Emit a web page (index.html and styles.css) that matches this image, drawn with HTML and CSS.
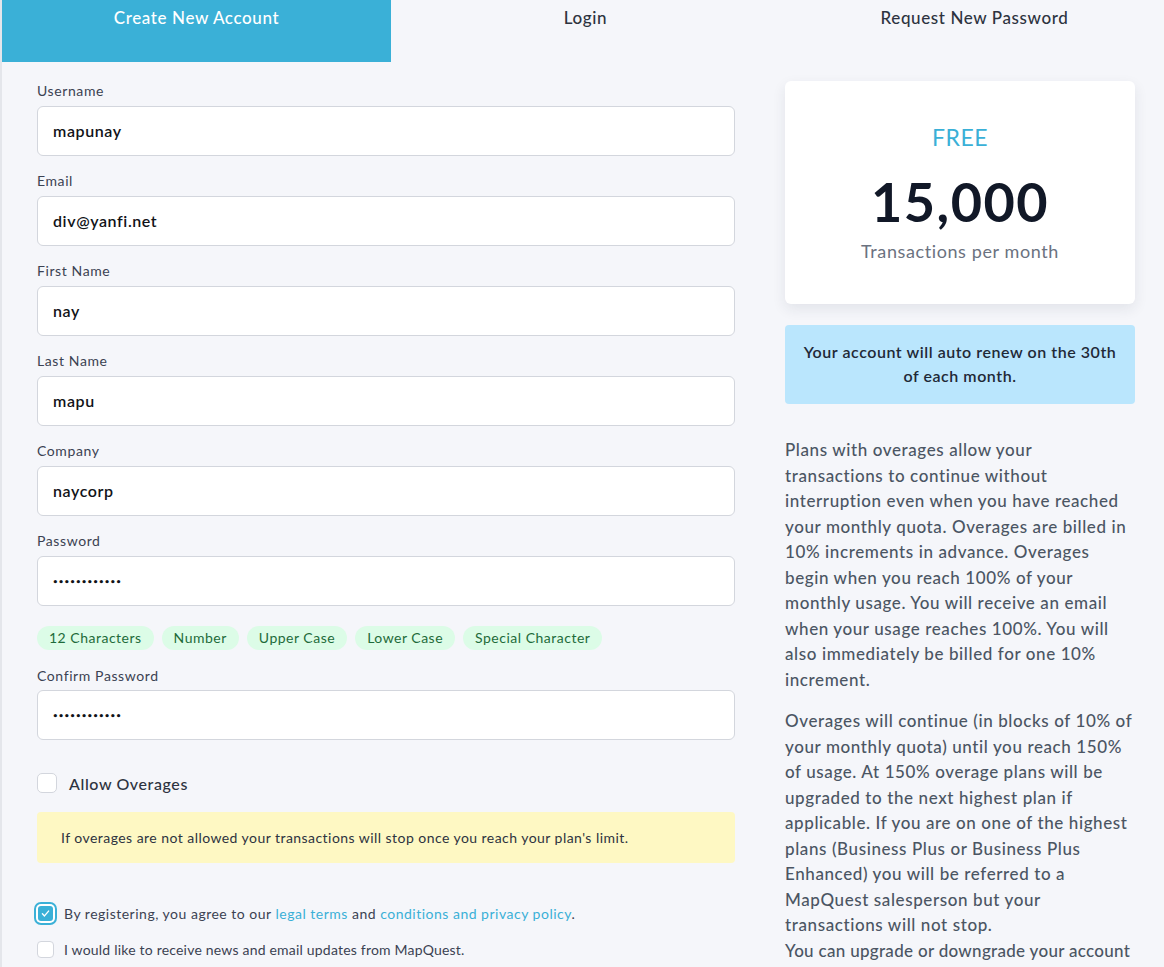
FILE: index.html
```html
<!DOCTYPE html>
<html lang="en">
<head>
<meta charset="utf-8">
<title>Create New Account</title>
<link rel="stylesheet" href="styles.css">
</head>
<body>
<div class="page">
  <nav class="tabs">
    <a class="tab active" href="#">Create New Account</a>
    <a class="tab" href="#">Login</a>
    <a class="tab" href="#">Request New Password</a>
  </nav>
  <main class="content">
    <form class="form">
      <div class="field">
        <label class="label">Username</label>
        <input class="input" type="text" value="mapunay">
      </div>
      <div class="field">
        <label class="label">Email</label>
        <input class="input" type="text" value="div@yanfi.net">
      </div>
      <div class="field">
        <label class="label">First Name</label>
        <input class="input" type="text" value="nay">
      </div>
      <div class="field">
        <label class="label">Last Name</label>
        <input class="input" type="text" value="mapu">
      </div>
      <div class="field">
        <label class="label">Company</label>
        <input class="input" type="text" value="naycorp">
      </div>
      <div class="field field-tight">
        <label class="label">Password</label>
        <input class="input input-pw" type="password" value="abcdefghijkl">
      </div>
      <div class="badges">
        <span class="badge">12 Characters</span>
        <span class="badge">Number</span>
        <span class="badge">Upper Case</span>
        <span class="badge">Lower Case</span>
        <span class="badge">Special Character</span>
      </div>
      <div class="field field-confirm">
        <label class="label">Confirm Password</label>
        <input class="input input-pw" type="password" value="abcdefghijkl">
      </div>
      <div class="overages">
        <span class="box"></span>
        <span class="overages-label">Allow Overages</span>
      </div>
      <div class="notice">If overages are not allowed your transactions will stop once you reach your plan's limit.</div>
      <div class="agree">
        <span class="box box-checked"><svg viewBox="0 0 16 16" width="11" height="11"><path d="M3.5 8.5 L6.5 11.5 L12.5 4.5" fill="none" stroke="#fff" stroke-width="2" stroke-linecap="round" stroke-linejoin="round"/></svg></span>
        <span>By registering, you agree to our <a href="#" class="link">legal terms</a> and <a href="#" class="link">conditions and privacy policy</a>.</span>
      </div>
      <div class="agree agree-news">
        <span class="box box-small"></span>
        <span>I would like to receive news and email updates from MapQuest.</span>
      </div>
    </form>
    <aside class="side">
      <div class="plan">
        <div class="plan-name">FREE</div>
        <div class="plan-count">15,000</div>
        <div class="plan-unit">Transactions per month</div>
      </div>
      <div class="renew">Your account will auto renew on the 30th of each month.</div>
      <p class="copy">Plans with overages allow your transactions to continue without interruption even when you have reached your monthly quota. Overages are billed in 10% increments in advance. Overages begin when you reach 100% of your monthly usage. You will receive an email when your usage reaches 100%. You will also immediately be billed for one 10% increment.</p>
      <p class="copy">Overages will continue (in blocks of 10% of your monthly quota) until you reach 150% of usage. At 150% overage plans will be upgraded to the next highest plan if applicable. If you are on one of the highest plans (Business Plus or Business Plus Enhanced) you will be referred to a MapQuest salesperson but your transactions will not stop.<br><span class="copy-tight">You can upgrade or downgrade your account at any time.</span></p>
    </aside>
  </main>
</div>
</body>
</html>
```
FILE: styles.css
```css
html, body {
  margin: 0;
  padding: 0;
  background: #f5f6fa;
  overflow: hidden;
}
body {
  font-family: Lato, "Liberation Sans", sans-serif;
  color: #374151;
  letter-spacing: 0.5px;
}
.page {
  border-left: 2px solid #e4e6eb;
  min-height: 967px;
  width: 1170px;
}
.tabs {
  display: grid;
  grid-template-columns: 389px 389px 389px;
  height: 62px;
}
.tab {
  display: block;
  text-align: center;
  padding-top: 7px;
  font-size: 17px;
  line-height: 22px;
  font-weight: 500;
  letter-spacing: 0.6px;
  color: #2d3340;
  text-decoration: none;
}
.tab.active {
  background: #3ab0d7;
  color: #ffffff;
}
.content {
  display: flex;
  gap: 50px;
  padding: 19px 0 0 35px;
}
.form {
  width: 698px;
  flex: none;
}
.field {
  display: flex;
  flex-direction: column;
  margin-bottom: 15px;
}
.field-tight {
  margin-bottom: 0;
}
.field-confirm {
  margin-top: 16px;
}
.label {
  font-size: 14px;
  line-height: 20px;
  letter-spacing: 0.6px;
  color: #3b4252;
  margin-bottom: 5px;
}
.field-confirm .label {
  margin-bottom: 4px;
}
.input {
  box-sizing: border-box;
  height: 50px;
  border: 1px solid #d3d6dd;
  border-radius: 6px;
  background: #fff;
  padding: 0 15px 2px;
  font-family: inherit;
  font-size: 16px;
  font-weight: 600;
  letter-spacing: 0.6px;
  color: #111318;
  outline: none;
}
.input-pw {
  font-size: 8px;
  letter-spacing: 1.1px;
  padding-bottom: 0;
}
.badges {
  display: flex;
  gap: 8px;
  margin-top: 20px;
}
.badge {
  background: #dcfce7;
  color: #1e6b3a;
  font-size: 14px;
  line-height: 24px;
  letter-spacing: 0.5px;
  padding: 0 12px;
  border-radius: 12px;
}
.overages {
  display: flex;
  align-items: center;
  gap: 12px;
  margin-top: 33px;
}
.box {
  display: inline-flex;
  align-items: center;
  justify-content: center;
  box-sizing: border-box;
  width: 20px;
  height: 20px;
  border: 1px solid #d3d6dd;
  border-radius: 5px;
  background: #fff;
  flex: none;
}
.overages-label {
  font-size: 16px;
  font-weight: 500;
  letter-spacing: 0.6px;
  color: #2d3340;
}
.notice {
  margin-top: 19px;
  background: #fef8c3;
  border-radius: 4px;
  padding: 0 24px;
  height: 51px;
  display: flex;
  align-items: center;
  font-size: 14px;
  letter-spacing: 0.45px;
  color: #2d3340;
}
.agree {
  display: flex;
  align-items: center;
  gap: 11px;
  margin-top: 42px;
  font-size: 14px;
  letter-spacing: 0.5px;
  color: #3b4252;
}
.box-checked {
  width: 15px;
  height: 15px;
  margin-left: 1px;
  border: none;
  border-radius: 3px;
  background: #3ab0d7;
  box-shadow: 0 0 0 2px #fff, 0 0 0 4px #3ab0d7;
}
.box-small {
  width: 17px;
  height: 17px;
  border-radius: 4px;
}
.agree-news {
  margin-top: 19px;
  gap: 10px;
  letter-spacing: 0.2px;
}
.link {
  color: #3ab0d7;
  text-decoration: none;
}
.side {
  width: 350px;
  flex: none;
}
.plan {
  background: #fff;
  border-radius: 6px;
  box-shadow: 0 5px 14px rgba(30, 40, 70, 0.09);
  height: 223px;
  box-sizing: border-box;
  padding-top: 41px;
  text-align: center;
}
.plan-name {
  font-size: 23px;
  line-height: 30px;
  letter-spacing: 0.5px;
  color: #3ab0d7;
}
.plan-count {
  margin-top: 22px;
  font-size: 54px;
  line-height: 56px;
  font-weight: 700;
  letter-spacing: 1.5px;
  color: #111827;
}
.plan-unit {
  margin-top: 9px;
  font-size: 18px;
  line-height: 24px;
  letter-spacing: 0.6px;
  color: #6b7280;
}
.renew {
  margin-top: 21px;
  background: #bae6fd;
  border-radius: 4px;
  height: 79px;
  box-sizing: border-box;
  padding: 15px 18px 0;
  text-align: center;
  font-size: 16px;
  line-height: 24px;
  font-weight: 600;
  letter-spacing: 0.55px;
  color: #1f2937;
}
.copy {
  margin: 33px 0 0;
  font-size: 17px;
  line-height: 25.5px;
  font-weight: 500;
  letter-spacing: 0.6px;
  color: #4b5563;
}
.copy + .copy {
  margin-top: 16px;
}
.copy-tight {
  letter-spacing: 0.3px;
}
```
